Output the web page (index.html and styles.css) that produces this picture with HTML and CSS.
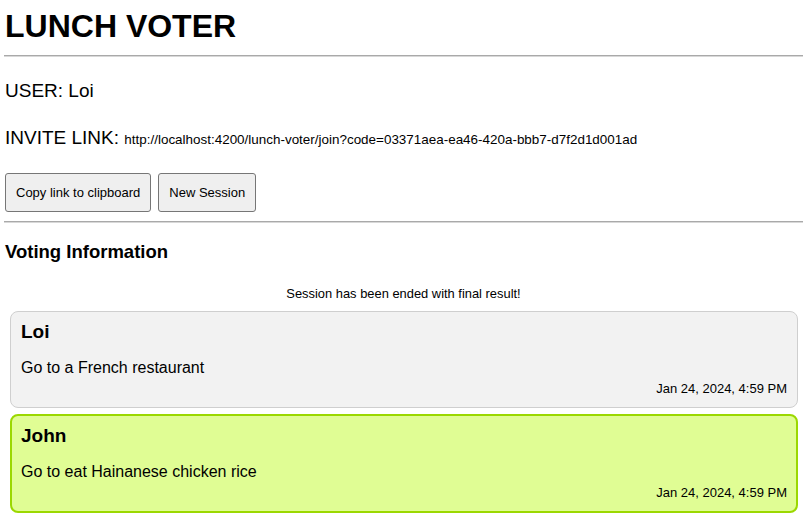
FILE: index.html
```html
<!DOCTYPE html>
<html>
<head>
<meta charset="utf-8">
<link rel="stylesheet" href="styles.css">
</head>
<body>
<div class="page">
  <h1 class="title">LUNCH VOTER</h1>
  <hr class="rule rule-top">
  <div class="user">USER: Loi</div>
  <div class="invite">INVITE LINK: <span class="link">http://localhost:4200/lunch-voter/join?code=03371aea-ea46-420a-bbb7-d7f2d1d001ad</span></div>
  <div class="actions">
    <button class="btn btn-copy">Copy link to clipboard</button>
    <button class="btn btn-new">New Session</button>
  </div>
  <hr class="rule rule-mid">
  <h2 class="section">Voting Information</h2>
  <p class="status">Session has been ended with final result!</p>
  <div class="cards">
    <div class="card">
      <div class="card-name">Loi</div>
      <div class="card-text">Go to a French restaurant</div>
      <div class="card-date">Jan 24, 2024, 4:59 PM</div>
    </div>
    <div class="card card-win">
      <div class="card-name">John</div>
      <div class="card-text">Go to eat Hainanese chicken rice</div>
      <div class="card-date">Jan 24, 2024, 4:59 PM</div>
    </div>
  </div>
</div>
</body>
</html>
```

FILE: styles.css
```css
html, body {
  margin: 0;
  padding: 0;
  background: #ffffff;
}
body {
  font-family: "Liberation Sans", Arial, sans-serif;
  color: #000;
}
.page {
  padding: 0 6px 0 4px;
  display: flex;
  flex-direction: column;
}
.title {
  margin: 8px 0 0 1px;
  font-size: 32px;
  line-height: 37px;
  font-weight: bold;
}
.rule {
  margin: 0;
  height: 0;
  border: 0;
  border-top: 1px solid #a9a9a9;
  border-bottom: 1px solid #d8d8d8;
}
.rule-top {
  margin-top: 10px;
}
.user {
  margin: 23px 0 0 1px;
  font-size: 19px;
  line-height: 22px;
}
.invite {
  margin: 25px 0 0 1px;
  font-size: 19px;
  line-height: 22px;
}
.link {
  font-size: 13.45px;
}
.actions {
  display: flex;
  gap: 7px;
  margin: 22px 0 0 1px;
}
.btn {
  font-family: "Liberation Sans", Arial, sans-serif;
  font-size: 13px;
  color: #000;
  height: 39px;
  padding: 0 10px;
  background: #efefef;
  border: 1px solid #767676;
  border-radius: 3px;
}
.rule-mid {
  margin-top: 9px;
}
.section {
  margin: 18px 0 0 1px;
  font-size: 18.5px;
  line-height: 22px;
  font-weight: bold;
}
.status {
  margin: 23px 0 0 0;
  font-size: 12.9px;
  line-height: 16px;
  text-align: center;
}
.cards {
  display: flex;
  flex-direction: column;
  gap: 6px;
  margin: 9px 5px 0 6px;
}
.card {
  background: #f2f2f2;
  border: 1px solid #cfcfcf;
  border-radius: 8px;
  padding: 8px 10px 10px 10px;
}
.card-name {
  font-size: 19px;
  line-height: 24px;
  font-weight: bold;
}
.card-text {
  margin-top: 14px;
  font-size: 16px;
  line-height: 20px;
}
.card-date {
  margin-top: 3px;
  text-align: right;
  font-size: 13px;
  line-height: 16px;
}
.card-win {
  background: #e0fd94;
  border: 2px solid #9bd800;
  padding: 8px 9px 10px 9px;
}
```
